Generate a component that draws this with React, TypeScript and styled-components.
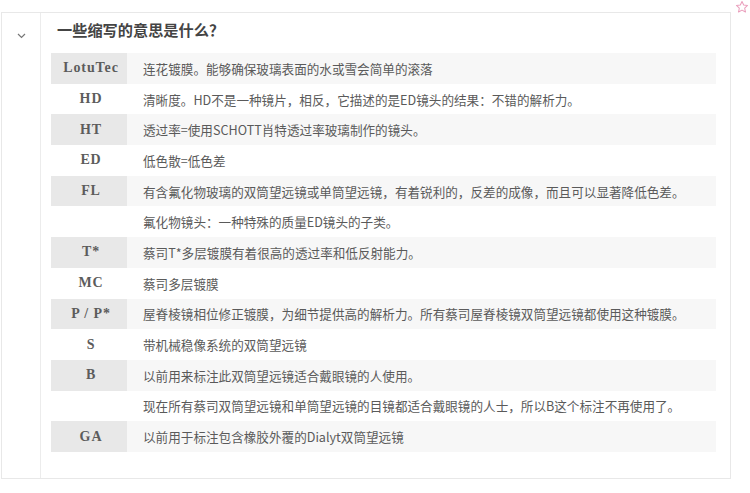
import React from "react";
import styled, { createGlobalStyle } from "styled-components";

const Global = createGlobalStyle`
  html, body { margin: 0; padding: 0; background: #fff; }
  body { font-family: "Noto Sans CJK SC", "Liberation Sans", sans-serif; }
`;

const Page = styled.div`
  position: relative;
  width: 750px;
  height: 493px;
  padding: 12px 0 0 1px;
  box-sizing: border-box;
`;

const Star = styled.svg`
  position: absolute;
  top: 0px;
  right: 1px;
  width: 14px;
  height: 14px;
`;

const Card = styled.div`
  display: flex;
  width: 730px;
  height: 467px;
  box-sizing: border-box;
  border: 1px solid #e8e8e8;
`;

const Side = styled.div`
  width: 39px;
  flex: none;
  border-right: 1px solid #ececec;
  display: flex;
  justify-content: center;
  padding-top: 20px;
  box-sizing: border-box;
`;

const Main = styled.div`
  flex: 1;
  padding: 6px 14px 0 10px;
`;

const Title = styled.h3`
  margin: 0 0 14px 6px;
  font-size: 15.2px;
  line-height: 20px;
  font-weight: bold;
  color: #444;
`;

const Table = styled.div`
  display: grid;
  grid-template-columns: 76px 1fr;
`;

const Label = styled.div<{ $shade: boolean }>`
  height: 30.7px;
  display: flex;
  align-items: center;
  justify-content: center;
  padding-left: 4px;
  box-sizing: border-box;
  background: ${(p) => (p.$shade ? "#e8e8e8" : "transparent")};
  font-family: "Liberation Serif", "DejaVu Serif", serif;
  font-weight: bold;
  font-size: 14px;
  letter-spacing: 0.9px;
  color: #5c5c5c;
  white-space: pre;
`;

const Desc = styled.div<{ $shade: boolean }>`
  height: 30.7px;
  display: flex;
  align-items: center;
  padding-left: 16px;
  box-sizing: border-box;
  background: ${(p) => (p.$shade ? "#f7f7f7" : "transparent")};
  font-size: 12.6px;
  color: #5a5a5a;
  white-space: nowrap;
`;

const rows: [string, string][] = [
  ["LotuTec", "连花镀膜。能够确保玻璃表面的水或雪会简单的滚落"],
  ["HD", "清晰度。HD不是一种镜片，相反，它描述的是ED镜头的结果：不错的解析力。"],
  ["HT", "透过率=使用SCHOTT肖特透过率玻璃制作的镜头。"],
  ["ED", "低色散=低色差"],
  ["FL", "有含氟化物玻璃的双筒望远镜或单筒望远镜，有着锐利的，反差的成像，而且可以显著降低色差。"],
  ["", "氟化物镜头：一种特殊的质量ED镜头的子类。"],
  ["T*", "蔡司T*多层镀膜有着很高的透过率和低反射能力。"],
  ["MC", "蔡司多层镀膜"],
  ["P / P*", "屋脊棱镜相位修正镀膜，为细节提供高的解析力。所有蔡司屋脊棱镜双筒望远镜都使用这种镀膜。"],
  ["S", "带机械稳像系统的双筒望远镜"],
  ["B", "以前用来标注此双筒望远镜适合戴眼镜的人使用。"],
  ["", "现在所有蔡司双筒望远镜和单筒望远镜的目镜都适合戴眼镜的人士，所以B这个标注不再使用了。"],
  ["GA", "以前用于标注包含橡胶外覆的Dialyt双筒望远镜"],
];

export default function App() {
  return (
    <>
      <Global />
      <Page>
        <Star viewBox="0 0 24 24" fill="none" stroke="#eaa0bd" strokeWidth="1.8" strokeLinejoin="round">
          <path d="M12 2.5l2.9 6.1 6.6.8-4.9 4.6 1.3 6.6L12 17.3l-5.9 3.3 1.3-6.6-4.9-4.6 6.6-.8z" />
        </Star>
        <Card>
          <Side>
            <svg width="9" height="6" viewBox="0 0 9 6" fill="none" stroke="#777" strokeWidth="1.2">
              <path d="M1 1l3.5 3.5L8 1" />
            </svg>
          </Side>
          <Main>
            <Title>一些缩写的意思是什么？</Title>
            <Table>
              {rows.map(([k, v], i) => (
                <React.Fragment key={i}>
                  <Label $shade={i % 2 === 0}>{k}</Label>
                  <Desc $shade={i % 2 === 0}>{v}</Desc>
                </React.Fragment>
              ))}
            </Table>
          </Main>
        </Card>
      </Page>
    </>
  );
}
